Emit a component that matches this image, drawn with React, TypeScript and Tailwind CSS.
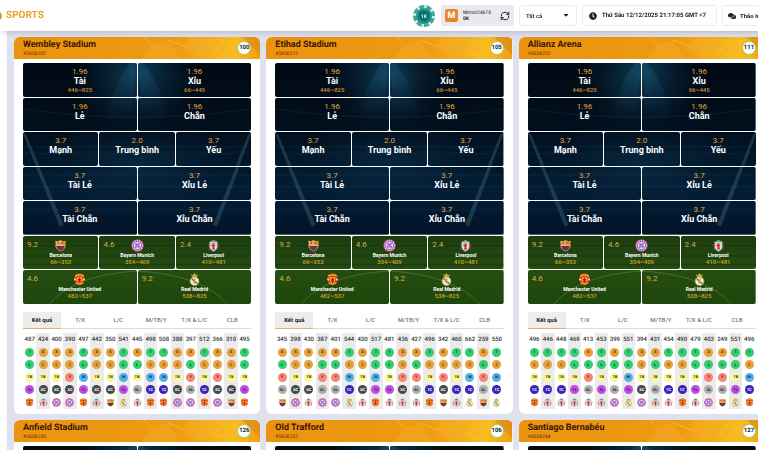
import { FaClock, FaCaretDown, FaComments } from "react-icons/fa";
import { RefreshCw } from "lucide-react";

type Level = "TB" | "Y" | "M";
type Club = "barcelona" | "bayern" | "liverpool" | "united" | "madrid";
type Result = [number, Level];

const wembley: Result[] = [
  [487, "TB"], [424, "TB"], [400, "TB"], [390, "Y"], [497, "M"], [442, "TB"],
  [350, "TB"], [541, "M"], [445, "TB"], [498, "M"], [508, "M"], [388, "TB"],
  [397, "Y"], [512, "TB"], [366, "Y"], [310, "TB"], [495, "TB"],
];

const etihad: Result[] = [
  [345, "Y"], [398, "TB"], [430, "TB"], [387, "Y"], [401, "Y"], [544, "M"],
  [430, "TB"], [517, "M"], [481, "TB"], [436, "Y"], [427, "Y"], [496, "TB"],
  [342, "Y"], [460, "TB"], [662, "M"], [259, "Y"], [550, "M"],
];

const allianz: Result[] = [
  [496, "TB"], [446, "TB"], [448, "TB"], [469, "TB"], [413, "Y"], [453, "TB"],
  [399, "TB"], [551, "M"], [394, "TB"], [431, "TB"], [454, "TB"], [490, "TB"],
  [479, "TB"], [403, "Y"], [249, "Y"], [551, "TB"], [496, "M"],
];

const stadiums = [
  { name: "Wembley Stadium", id: "#5656202", time: 100, results: wembley },
  { name: "Etihad Stadium", id: "#5656212", time: 105, results: etihad },
  { name: "Allianz Arena", id: "#5656222", time: 111, results: allianz },
  { name: "Anfield Stadium", id: "#5656230", time: 126, results: wembley },
  { name: "Old Trafford", id: "#5656237", time: 106, results: etihad },
  { name: "Santiago Bernabéu", id: "#5656244", time: 127, results: allianz },
];

type Bet = { name: string; odds: string; range?: string; club?: Club };

const betRows: Bet[][] = [
  [
    { name: "Tài", odds: "1.96", range: "446~825" },
    { name: "Xỉu", odds: "1.96", range: "66~445" },
  ],
  [
    { name: "Lẻ", odds: "1.96" },
    { name: "Chẵn", odds: "1.96" },
  ],
  [
    { name: "Mạnh", odds: "3.7" },
    { name: "Trung bình", odds: "2.0" },
    { name: "Yếu", odds: "3.7" },
  ],
  [
    { name: "Tài Lẻ", odds: "3.7" },
    { name: "Xỉu Lẻ", odds: "3.7" },
  ],
  [
    { name: "Tài Chẵn", odds: "3.7" },
    { name: "Xỉu Chẵn", odds: "3.7" },
  ],
  [
    { name: "Barcelona", odds: "9.2", range: "66~353", club: "barcelona" },
    { name: "Bayern Munich", odds: "4.6", range: "354~409", club: "bayern" },
    { name: "Liverpool", odds: "2.4", range: "410~481", club: "liverpool" },
  ],
  [
    { name: "Manchester United", odds: "4.6", range: "482~537", club: "united" },
    { name: "Real Madrid", odds: "9.2", range: "538~825", club: "madrid" },
  ],
];

const tabs = ["Kết quả", "T/X", "L/C", "M/TB/Y", "T/X & L/C", "CLB"];

const dotColors: Record<string, string> = {
  T: "bg-[#35cc72] text-[#0c3d20]",
  L: "bg-[#35cc72] text-[#0c3d20]",
  X: "bg-[#e6a03c] text-[#4a2c05]",
  C: "bg-[#e6a03c] text-[#7a4a08]",
  TB: "bg-[#fbf79b] text-[#3b3a10]",
  Y: "bg-[#f58678] text-[#7a1610]",
  M: "bg-[#58b0e8] text-[#0c3560]",
  XC: "bg-[#46484b] text-white",
  TC: "bg-[#3a21b8] text-white",
  TL: "bg-[#bd50e2] text-[#4b0d63]",
  XL: "bg-[#b0b0b0] text-[#2b2b2b]",
};

const size = (n: number) => (n > 445 ? "T" : "X");
const parity = (n: number) => (n % 2 ? "L" : "C");
const clubOf = (n: number): Club => {
  if (n <= 353) return "barcelona";
  if (n <= 409) return "bayern";
  if (n <= 481) return "liverpool";
  if (n <= 537) return "united";
  return "madrid";
};

const resultRows: ((r: Result) => string)[] = [
  ([n]) => size(n),
  ([n]) => parity(n),
  ([, level]) => level,
  ([n]) => size(n) + parity(n),
];

const BOARD_W = 229;
const ROW_H = 34;

// Shared drawings, referenced by every card through <use>
const Sprites = () => (
  <svg className="absolute w-0 h-0" aria-hidden="true">
    <defs>
      <linearGradient id="night" x1="0" y1="0" x2="0" y2="1">
        <stop offset="0" stopColor="#010a14" />
        <stop offset="0.4" stopColor="#02101e" />
        <stop offset="0.75" stopColor="#031d35" />
        <stop offset="1" stopColor="#021428" />
      </linearGradient>
      <radialGradient id="glow">
        <stop offset="0" stopColor="#17587c" stopOpacity="0.65" />
        <stop offset="1" stopColor="#0a3350" stopOpacity="0" />
      </radialGradient>
      <linearGradient id="beam" x1="0" y1="0" x2="0" y2="1">
        <stop offset="0" stopColor="#2f86ad" stopOpacity="0.2" />
        <stop offset="1" stopColor="#1b5b80" stopOpacity="0" />
      </linearGradient>
      <linearGradient id="grass" x1="0" y1="0" x2="0" y2="1">
        <stop offset="0" stopColor="#1c3d10" />
        <stop offset="0.5" stopColor="#264d10" />
        <stop offset="1" stopColor="#1d460d" />
      </linearGradient>

      <g id="scene">
        <rect width="229" height="170" fill="url(#night)" />
        <ellipse cx="114" cy="12" rx="60" ry="56" fill="url(#glow)" />
        <ellipse cx="114" cy="100" rx="110" ry="44" fill="url(#glow)" opacity="0.4" />
        <path d="M108 0 Q96 14 84 50 L108 60 L114 0Z" fill="url(#beam)" />
        <path d="M120 0 Q132 14 144 50 L120 60 L114 0Z" fill="url(#beam)" />
        <path d="M0 70 L3 70 L41 160 L37 162Z M229 70 L226 70 L190 160 L194 162Z" fill="#5f9aa4" opacity="0.25" />
        <path d="M0 45 Q114 62 229 45 M0 83 H229 M0 90 H229 M0 110 H229 M0 122 H229 M0 145 H229" stroke="#2a6687" strokeOpacity="0.2" fill="none" />
        <rect y="170" width="229" height="70" fill="url(#grass)" />
        <path d="M0 180 H229 M0 190 H229 M0 199 H229" stroke="#11300a" strokeOpacity="0.35" strokeWidth="2" />
        <path d="M25 240 Q50 209 114 205 Q180 209 206 240" stroke="#76a35a" strokeOpacity="0.4" fill="none" />
      </g>

      <linearGradient id="gold" x1="0" y1="0" x2="1" y2="0">
        <stop offset="0" stopColor="#ea930f" />
        <stop offset="0.65" stopColor="#ee9a12" />
        <stop offset="0.9" stopColor="#f8bc22" />
        <stop offset="1" stopColor="#f09e14" />
      </linearGradient>
      <symbol id="banner" viewBox="0 0 246 22" preserveAspectRatio="none">
        <rect width="246" height="22" fill="url(#gold)" />
        <path d="M128 22 L138 8 L154 3 L166 22Z M176 0 L170 10 L182 20 L200 14 L196 0Z" fill="#f6ae2c" opacity="0.4" />
        <path d="M138 8 L130 0 M154 3 L172 10 M182 20 L184 22 M200 14 L218 22 M200 14 L212 0 M232 0 L246 14" stroke="#fccb52" strokeOpacity="0.5" fill="none" />
        <path d="M228 0 L246 0 V18Z" fill="#d98512" opacity="0.6" />
      </symbol>

      <symbol id="barcelona" viewBox="0 0 24 24">
        <path d="M2 3 L7 4 L12 2 L17 4 L22 3 L21 8 Q24 18 12 23.5 Q0 18 3 8Z" fill="#d9a23c" />
        <path d="M4 5 H11.5 V10 H4Z" fill="#f3e6dc" />
        <path d="M7 4.5 H8.8 V10 H7Z M4 6.7 H11.5 V8.2 H4Z" fill="#d4252e" />
        <path d="M12.5 5 H20 V10 H12.5Z" fill="#e9b32c" />
        <path d="M14 5 V10 M16 5 V10 M18 5 V10" stroke="#c3272f" />
        <path d="M4 10.5 H20 V13 H4Z" fill="#e8b84a" />
        <path d="M4 13 H20 Q18.5 19 12 22 Q5.5 19 4 13Z" fill="#22408e" />
        <path d="M7.5 13 V19 M12 13 V21.5 M16.5 13 V19" stroke="#a3203f" strokeWidth="2.4" />
      </symbol>
      <symbol id="bayern" viewBox="0 0 24 24">
        <circle cx="12" cy="12" r="11.5" fill="#b94a9e" />
        <circle cx="12" cy="12" r="9" fill="none" stroke="#f2d5ea" strokeWidth="2" strokeDasharray="2.5 1.5" />
        <circle cx="12" cy="12" r="6.5" fill="#f4f4fb" />
        <path d="M7 9 L10 6 L12 9 L9 12Z M12 9 L15 6 L17 9 L14 12Z M9 12 L12 9 L14 12 L12 15Z M6 13 L9 12 L11 16 L9 18Z M14 12 L18 13 L15 18 L12 15Z" fill="#7d7fd0" />
      </symbol>
      <symbol id="liverpool" viewBox="0 0 24 24">
        <path d="M7 5 Q12 -2 17 5Z" fill="#58a48c" />
        <path d="M5 5 H19 V16 Q17 21 12 23 Q7 21 5 16Z" fill="#eadfdd" stroke="#7e9a92" />
        <path d="M2 10 Q5 13 4 20 M22 10 Q19 13 20 20" stroke="#b9474b" strokeWidth="1.6" fill="none" />
        <path d="M8 8 H16 M12 9 L15 11 L13 14 L14 19 H10 L11 15 L8 12Z" stroke="#c0303a" fill="#c92a38" />
      </symbol>
      <symbol id="united" viewBox="0 0 24 24">
        <path d="M4 3 Q12 -1 20 3 Q24 12 19 19 Q12 25 5 19 Q0 12 4 3Z" fill="#d93a1c" />
        <path d="M4 6 Q12 1 20 6 M5 18 Q12 23 19 18" stroke="#f6bd2b" strokeWidth="2" fill="none" />
        <path d="M7 8 H17 V14 Q15 18 12 19 Q8 18 7 14Z" fill="#f4c12f" />
        <path d="M12 8 L15 12 L13.5 18 H10.5 L9 12Z" fill="#b3200f" />
        <circle cx="4" cy="12" r="2" fill="#f3e2c0" />
        <circle cx="20" cy="12" r="2" fill="#f3e2c0" />
      </symbol>
      <symbol id="madrid" viewBox="0 0 24 24">
        <path d="M7 7 L6 2 L9 4 L12 0 L15 4 L18 2 L17 7Z" fill="#d9a92e" />
        <circle cx="12" cy="15" r="8" fill="#f3f0da" stroke="#c9a63a" strokeWidth="1.6" />
        <path d="M6.5 10 L17.5 20" stroke="#4b6ea8" strokeWidth="2.4" />
        <path d="M15 11 Q10 9 9 14 Q9 19 15 18 M12 10 V20" stroke="#c09a2d" strokeWidth="1.4" fill="none" />
      </symbol>
    </defs>
  </svg>
);

const Crest = ({ club, className }: { club: Club; className: string }) => (
  <svg viewBox="0 0 24 24" className={className} role="img" aria-label={club}>
    <use href={`#${club}`} />
  </svg>
);

const BetCell = ({ bet, row, col, count }: { bet: Bet; row: number; col: number; count: number }) => {
  const width = BOARD_W / count;

  return (
    <button type="button" className="relative flex flex-1 basis-0 flex-col items-center overflow-hidden rounded-[2px] cursor-pointer">
      <svg
        viewBox={`${col * width} ${row * ROW_H} ${width} ${ROW_H}`}
        preserveAspectRatio="none"
        className="absolute inset-0 h-full w-full"
        aria-hidden="true"
      >
        <use href="#scene" />
      </svg>
      {bet.club ? (
        <>
          <span className="absolute left-1 top-1 text-[8px] leading-[10px] text-[#d9ae40]">{bet.odds}</span>
          <span className="relative flex flex-col items-center pt-[3px]">
            <Crest club={bet.club} className="h-[13px] w-[13px]" />
            <span className="text-[5px] leading-[7px] font-bold text-white whitespace-nowrap">{bet.name}</span>
            <span className="text-[6px] leading-[6px] font-medium text-[#d3a02c]">{bet.range}</span>
          </span>
        </>
      ) : (
        <span className="relative flex flex-col items-center pt-1">
          <span className="text-[8px] leading-[9px] text-[#e8a540]">{bet.odds}</span>
          <span className="text-[9px] leading-[10px] font-bold text-white whitespace-nowrap">{bet.name}</span>
          {bet.range && <span className="text-[6px] leading-[7px] font-medium text-[#cf8f36]">{bet.range}</span>}
        </span>
      )}
    </button>
  );
};

const ResultTable = ({ results }: { results: Result[] }) => (
  <table className="mt-1 w-full table-fixed border-collapse">
    <thead>
      <tr className="h-[13px]">
        {results.map(([n], i) => (
          <th key={i} scope="col" className="p-0 text-center text-[6px] leading-[8px] font-medium text-[#333] even:bg-[#ebebeb]">
            {n}
          </th>
        ))}
      </tr>
    </thead>
    <tbody>
      {resultRows.map((label, row) => (
        <tr key={row} className="h-3 even:h-[13px]">
          {results.map((result, i) => (
            <td key={i} className="p-0 even:bg-[#ebebeb]">
              <span
                className={`mx-auto flex h-[9px] w-[9px] items-center justify-center rounded-full text-[4px] leading-none font-bold ${dotColors[label(result)]}`}
              >
                {label(result)}
              </span>
            </td>
          ))}
        </tr>
      ))}
      <tr className="h-[13px]">
        {results.map(([n], i) => (
          <td key={i} className="p-0 even:bg-[#ebebeb]">
            <Crest club={clubOf(n)} className="mx-auto h-[9px] w-[9px]" />
          </td>
        ))}
      </tr>
    </tbody>
  </table>
);

const StadiumCard = ({ stadium }: { stadium: (typeof stadiums)[number] }) => (
  <article className="overflow-hidden rounded-md bg-white">
    <header className="relative flex h-[22px] items-center justify-between px-[9px]">
      <svg className="absolute inset-0 h-full w-full" aria-hidden="true">
        <use href="#banner" />
      </svg>
      <div className="relative">
        <h2 className="text-[9px] leading-[12px] font-bold text-[#3a1703]">{stadium.name}</h2>
        <p className="text-[5px] leading-[6px] text-[#5a2c05]">{stadium.id}</p>
      </div>
      <span className="relative flex h-[14px] w-[14px] items-center justify-center rounded-full border border-[#9bcf6a] bg-white text-[6px] leading-none font-bold text-[#222]">
        {stadium.time}
      </span>
    </header>

    <div className="px-[9px] pt-1 pb-[5px]">
      <div className="flex h-[241px] flex-col gap-px">
        {betRows.map((bets, row) => (
          <div key={row} className="flex flex-1 basis-0 gap-px">
            {bets.map((bet, col) => (
              <BetCell key={bet.name} bet={bet} row={row} col={col} count={bets.length} />
            ))}
          </div>
        ))}
      </div>

      <div role="tablist" className="mt-2 flex border-b border-[#dcdcdc]">
        {tabs.map((tab, i) => (
          <button
            key={tab}
            type="button"
            role="tab"
            aria-selected={i === 0}
            className={`-mb-px h-[17px] flex-1 basis-0 border-b text-[6px] leading-[8px] whitespace-nowrap ${
              i === 0 ? "border-[#e0b46c] bg-[#ededed] font-bold text-[#222]" : "border-transparent font-medium text-[#777]"
            }`}
          >
            {tab}
          </button>
        ))}
      </div>

      <ResultTable results={stadium.results} />
    </div>
  </article>
);

const Chip = () => (
  <svg viewBox="0 0 24 24" className="h-6 w-6">
    <circle cx="12" cy="12" r="11" fill="#3fa79d" />
    <circle cx="12" cy="12" r="9.5" fill="none" stroke="#d8f1ed" strokeWidth="3" strokeDasharray="2.4 5.06" />
    <circle cx="12" cy="12" r="7.6" fill="#168a82" />
    <circle cx="12" cy="12" r="6.2" fill="#0d6f6d" stroke="#66c9bd" strokeWidth="0.7" strokeDasharray="1.4 1" />
    <text x="12" y="13.8" textAnchor="middle" fontSize="5" fontWeight="700" fill="#d9f5ef">1K</text>
  </svg>
);

const TopBar = () => (
  <header className="relative z-10 -mr-8 flex h-[31px] shrink-0 items-center justify-between bg-white shadow-md">
    <a href="#" className="-ml-2 flex items-center gap-1 text-[#e5a32a]">
      <svg viewBox="0 0 10 10" className="h-[10px] w-[10px]">
        <circle cx="5" cy="5" r="5" fill="#e39a22" />
        <path d="M5 2 L8 4 L7 8 H3 L2 4Z" fill="#f6cf6a" />
      </svg>
      <span className="text-[10px] leading-4 font-bold">SPORTS</span>
    </a>

    <div className="flex h-[21px] items-stretch gap-[5px] text-[6px] leading-[8px] text-[#222]">
      <div className="flex items-center">
        <Chip />
      </div>
      <div className="flex w-[73px] items-center gap-[5px] rounded-[3px] bg-[#e9e9ef] px-1">
        <span className="flex h-[13px] w-[13px] items-center justify-center rounded-[2px] bg-[#e9862a] text-[9px] font-bold text-white">M</span>
        <span className="flex flex-1 flex-col text-[5px] leading-[6px]">
          <span>Mimin24678</span>
          <span className="font-bold">0K</span>
        </span>
        <button type="button" aria-label="Làm mới">
          <RefreshCw className="h-[10px] w-[10px]" strokeWidth={2.4} />
        </button>
      </div>
      <label className="relative flex w-[58px]">
        <select
          aria-label="Bộ lọc"
          className="w-full appearance-none rounded-[3px] border border-[#ebebeb] bg-white pl-[6px] text-[6px] font-medium"
        >
          <option>Tất cả</option>
        </select>
        <FaCaretDown className="pointer-events-none absolute right-[7px] top-[6px] h-2 w-2" />
      </label>
      <div className="flex w-[135px] items-center gap-[5px] rounded-[3px] border border-[#ebebeb] px-[6px] font-bold whitespace-nowrap">
        <FaClock className="h-2 w-2 shrink-0" />
        <time>Thứ Sáu 12/12/2025 21:17:05 GMT +7</time>
      </div>
      <button type="button" className="flex w-[68px] items-center gap-1 rounded-[3px] border border-[#ebebeb] px-[5px] font-bold whitespace-nowrap">
        <FaComments className="h-2 w-2 shrink-0" />
        Thảo luận
      </button>
    </div>
  </header>
);

const App = () => {
  return (
    <div className="flex h-screen flex-col overflow-hidden bg-white font-[Roboto,sans-serif] [text-rendering:geometricPrecision]">
      <Sprites />
      <TopBar />
      <main className="ml-[7px] -mr-[7px] grid min-h-0 flex-1 auto-rows-max grid-cols-3 content-start gap-[6px] overflow-y-auto bg-[#dfe1ee] pl-[7px] pt-[6px] [scrollbar-width:none]">
        {stadiums.map((stadium) => (
          <StadiumCard key={stadium.id} stadium={stadium} />
        ))}
      </main>
    </div>
  );
};

export default App;
